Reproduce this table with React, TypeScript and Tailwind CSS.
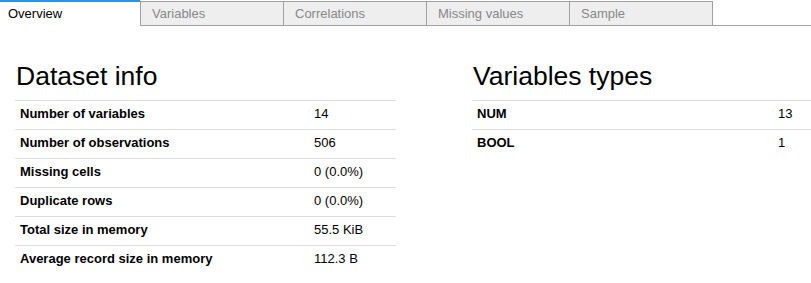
import React from 'react';

const tabs = ['Overview', 'Variables', 'Correlations', 'Missing values', 'Sample'];

const datasetInfo: [string, string][] = [
  ['Number of variables', '14'],
  ['Number of observations', '506'],
  ['Missing cells', '0 (0.0%)'],
  ['Duplicate rows', '0 (0.0%)'],
  ['Total size in memory', '55.5 KiB'],
  ['Average record size in memory', '112.3 B'],
];

const variableTypes: [string, string][] = [
  ['NUM', '13'],
  ['BOOL', '1'],
];

function InfoTable({ rows, labelWidth }: { rows: [string, string][]; labelWidth: string }) {
  return (
    <div className="flex flex-col">
      {rows.map(([label, value]) => (
        <div key={label} className="flex h-[29px] items-center border-t border-[#dddddd] pb-[2px] text-[13px] text-black">
          <div className={`${labelWidth} shrink-0 px-[5px] font-bold`}>{label}</div>
          <div className="px-[5px]">{value}</div>
        </div>
      ))}
    </div>
  );
}

export default function App() {
  return (
    <div className="w-[811px] h-[283px] overflow-hidden bg-white font-['Liberation_Sans',Arial,sans-serif]">
      {/* Tab strip */}
      <div className="flex h-[26px] border-b border-[#a0a0a0]">
        {tabs.map((t, i) =>
          i === 0 ? (
            <div
              key={t}
              className="relative z-10 -mb-px flex h-[26px] w-[140px] items-center border-t-2 border-[#2196f3] bg-white pl-[8px] text-[13px] text-black"
            >
              {t}
            </div>
          ) : (
            <div
              key={t}
              className={`mt-px flex h-[24px] w-[143px] items-center border-l border-t border-[#a0a0a0] bg-[#eeeeee] pl-[11px] text-[13px] text-[#888888] ${
                i === tabs.length - 1 ? 'w-[144px] border-r' : ''
              }`}
            >
              {t}
            </div>
          )
        )}
      </div>

      {/* Overview panel */}
      <div className="flex">
        <div className="ml-[15px] w-[381px] shrink-0">
          <h2 className="mt-[36px] mb-[10px] pl-px text-[26.5px] leading-[28px] text-black">Dataset info</h2>
          <InfoTable rows={datasetInfo} labelWidth="w-[294px]" />
        </div>
        <div className="ml-[76px] w-[381px] shrink-0">
          <h2 className="mt-[36px] mb-[10px] pl-px text-[26.5px] leading-[28px] text-black">Variables types</h2>
          <InfoTable rows={variableTypes} labelWidth="w-[301px]" />
        </div>
      </div>
    </div>
  );
}
